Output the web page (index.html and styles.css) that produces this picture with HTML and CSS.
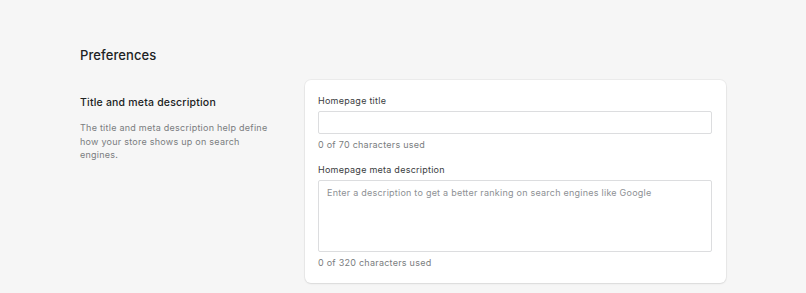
FILE: index.html
```html
<!DOCTYPE html>
<html lang="en">
<head>
<meta charset="utf-8">
<title>Preferences</title>
<link rel="stylesheet" href="styles.css">
</head>
<body>
<main class="page">
  <h1 class="page-title">Preferences</h1>
  <section class="row">
    <div class="aside">
      <h2 class="aside-title">Title and meta description</h2>
      <p class="aside-text">The title and meta description help define how your store shows up on search engines.</p>
    </div>
    <div class="card">
      <label class="label" for="t">Homepage title</label>
      <input class="input" id="t" type="text">
      <p class="help">0 of 70 characters used</p>
      <label class="label label-second" for="d">Homepage meta description</label>
      <textarea class="textarea" id="d" placeholder="Enter a description to get a better ranking on search engines like Google"></textarea>
      <p class="help">0 of 320 characters used</p>
    </div>
  </section>
</main>
</body>
</html>
```

FILE: styles.css
```css
* { box-sizing: border-box; }
html, body { margin: 0; padding: 0; }
body {
  background: #f6f6f6;
  font-family: Inter, "Noto Sans", sans-serif;
  color: #202223;
  width: 806px;
  height: 293px;
  overflow: hidden;
}
.page {
  padding: 47px 0 0 80px;
}
.page-title {
  margin: 0;
  font-size: 13px;
  line-height: 16px;
  font-weight: 500;
  color: #202223;
  letter-spacing: 0.1px;
}
.row {
  display: flex;
  margin-top: 17px;
}
.aside {
  width: 225px;
  padding-top: 16px;
}
.aside-title {
  margin: 0;
  font-size: 10.5px;
  line-height: 14px;
  font-weight: 500;
  letter-spacing: 0.2px;
}
.aside-text {
  width: 194px;
  margin: 11px 0 0;
  font-size: 9px;
  line-height: 13.5px;
  letter-spacing: 0.25px;
  color: #7a7d80;
}
.card {
  width: 421px;
  background: #fff;
  border-radius: 6px;
  box-shadow: 0 0 0 1px rgba(0,0,0,0.04), 0 1px 2px rgba(0,0,0,0.08);
  padding: 15px 14px 14px 13px;
  display: flex;
  flex-direction: column;
}
.label {
  font-size: 9px;
  line-height: 12px;
  letter-spacing: 0.25px;
  color: #3a3c3e;
}
.label-second { margin-top: 13px; }
.input, .textarea {
  display: block;
  width: 100%;
  margin-top: 4px;
  border: 1px solid #dcdddf;
  border-radius: 2px;
  background: #fff;
  font-family: inherit;
  font-size: 9px;
  letter-spacing: 0.24px;
  outline: none;
}
.input { height: 23px; }
.textarea {
  height: 72px;
  resize: none;
  padding: 6px 8px;
  line-height: 12px;
}
.textarea::placeholder { color: #8d9094; }
.help {
  margin: 5px 0 0;
  font-size: 9px;
  line-height: 12px;
  letter-spacing: 0.25px;
  color: #7a7d80;
}
```
